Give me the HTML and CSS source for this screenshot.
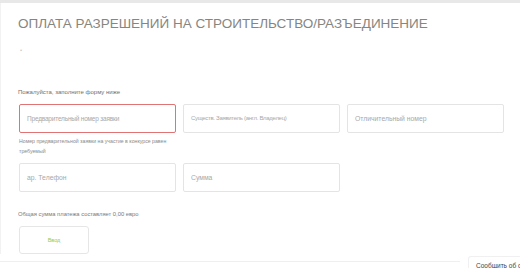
FILE: index.html
```html
<!DOCTYPE html>
<html lang="ru">
<head>
<meta charset="utf-8">
<link rel="stylesheet" href="styles.css">
</head>
<body>
<div class="topbar"></div>
<div class="page">
  <h1 class="title">ОПЛАТА РАЗРЕШЕНИЙ НА СТРОИТЕЛЬСТВО/РАЗЪЕДИНЕНИЕ</h1>
  <div class="dot">•</div>
  <p class="intro">Пожалуйста, заполните форму ниже</p>
  <div class="row">
    <div class="field">
      <div class="input error first">Предварительный номер заявки</div>
      <div class="help">Номер предварительной заявки на участие в конкурсе равен требуемый</div>
    </div>
    <div class="field"><div class="input narrow">Существ. Заявитель (англ. Владелец)</div></div>
    <div class="field"><div class="input">Отличительный номер</div></div>
  </div>
  <div class="row row2">
    <div class="field"><div class="input">ар. Телефон</div></div>
    <div class="field"><div class="input">Сумма</div></div>
  </div>
  <p class="total">Общая сумма платежа составляет 0,00 евро</p>
  <div class="btn">Ввод</div>
</div>
<div class="bottomline"></div>
<div class="report">Сообщить об ошибке</div>
</body>
</html>
```
FILE: styles.css
```css
html, body {
  margin: 0;
  padding: 0;
  background: #fff;
  font-family: "Liberation Sans", Arial, sans-serif;
  overflow: hidden;
  height: 268px;
}
.topbar {
  height: 3px;
  background: #e8e8e8;
}
.page {
  padding-left: 17px;
  border-left: 1px solid #f2f2f2;
}
.title {
  margin: 0;
  padding-top: 12px;
  font-size: 13.5px;
  line-height: 18px;
  font-weight: normal;
  color: #86867f;
}
.dot {
  font-size: 6px;
  color: #c8c8c8;
  line-height: 8px;
  margin-top: 13px;
  padding-left: 2px;
}
.intro {
  margin: 34px 0 0;
  font-size: 6px;
  line-height: 9px;
  color: #707070;
}
.row {
  display: flex;
  gap: 7px;
  margin-top: 7px;
  margin-left: 1px;
}
.row2 {
  margin-top: 7px;
}
.field {
  width: 157px;
}
.input {
  box-sizing: border-box;
  height: 29px;
  border: 1px solid #e4e4e4;
  border-radius: 2px;
  padding: 0 7px;
  font-size: 6.8px;
  line-height: 27px;
  color: #a8a8a8;
  white-space: nowrap;
}
.input.narrow {
  font-size: 6px;
  letter-spacing: -0.3px;
}
.input.first {
  font-size: 6.5px;
  letter-spacing: -0.2px;
}
.input.error {
  border-color: #e07474;
}
.help {
  margin-top: 3px;
  font-size: 5.2px;
  line-height: 10px;
  color: #8a8a8a;
  width: 150px;
}
.total {
  margin: 18px 0 0;
  font-size: 5.8px;
  line-height: 9px;
  color: #7a7a7a;
}
.btn {
  box-sizing: border-box;
  width: 70px;
  height: 28px;
  margin-top: 7px;
  margin-left: 1px;
  border: 1px solid #e6e6e6;
  border-radius: 3px;
  text-align: center;
  font-size: 5.5px;
  line-height: 26px;
  color: #8ccc55;
}
.bottomline {
  position: absolute;
  left: 0;
  top: 261px;
  width: 460px;
  height: 1px;
  background: #efefef;
}
.report {
  position: absolute;
  left: 468px;
  top: 256px;
  width: 52px;
  height: 12px;
  overflow: hidden;
  box-sizing: border-box;
  border-top: 1px solid #f0f0f0;
  border-left: 1px solid #f0f0f0;
  border-radius: 3px 0 0 0;
  padding: 5px 0 0 7px;
  font-size: 6.5px;
  line-height: 7px;
  color: #444;
  white-space: nowrap;
  background: #fff;
}
```
